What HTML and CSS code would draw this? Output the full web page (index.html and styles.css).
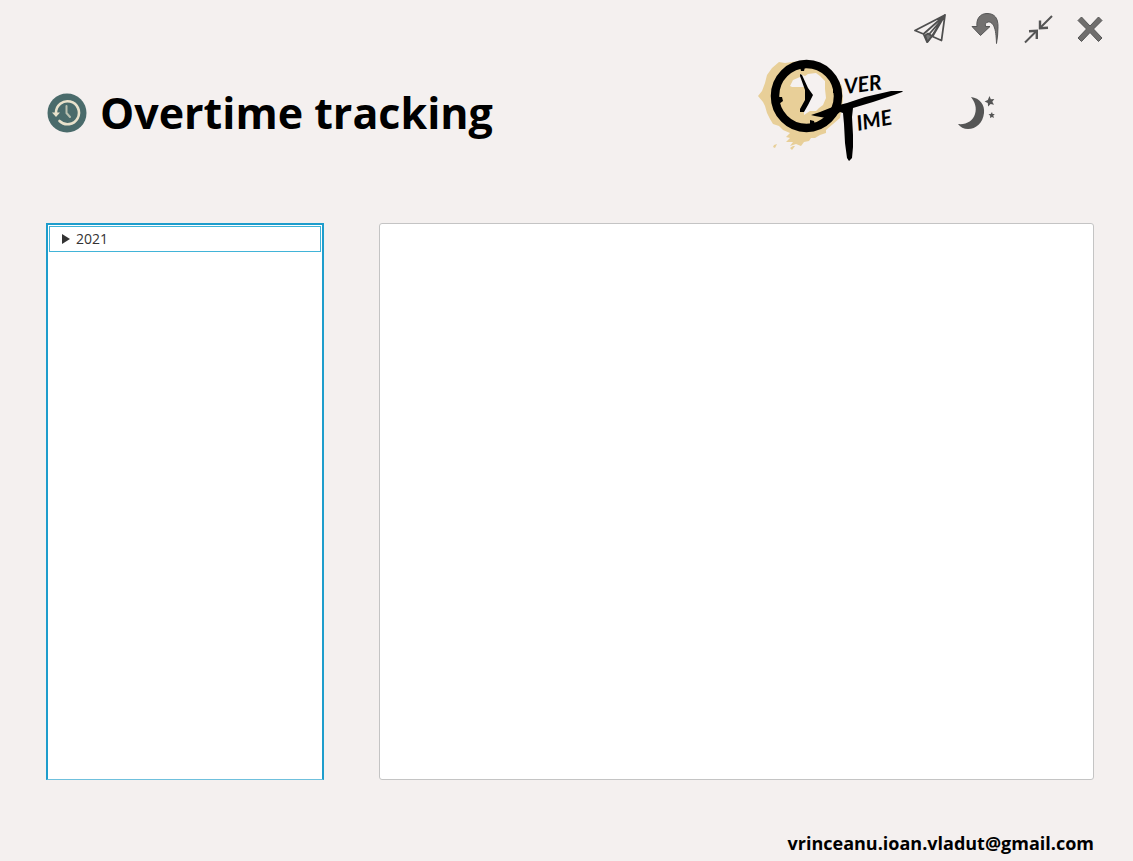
FILE: index.html
```html
<!DOCTYPE html>
<html lang="en">
<head>
<meta charset="utf-8">
<meta name="viewport" content="width=device-width, initial-scale=1">
<title>Overtime tracking</title>
<link rel="stylesheet" href="styles.css">
</head>
<body>
<div class="app">
  <nav class="toolbar" aria-label="Window">
    <button class="icon-button" type="button" aria-label="Send">
      <svg width="34" height="34" viewBox="0 0 34 34" fill="none" stroke="#4f4f4f" stroke-width="1.8" stroke-linejoin="round">
        <path d="M31 3L1 18.500l8.500 3.500zM31 3L27.500 28.500l-9-4zM31 3L9.500 22l3.500 8 5-6zM30 5L14 23.500l-.5 5.500"/>
        <path d="M11 23.500l3-2 4 2.500-4.500 6z" fill="#777"/>
      </svg>
    </button>
    <button class="icon-button" type="button" aria-label="Back">
      <svg width="34" height="34" viewBox="0 0 34 34">
        <path d="M5 14.500h5C9 7 13 1.500 20 1.500c8 0 11 5 11 13 0 6-.5 11-1.500 17-.3-8-.8-13-2.500-17-1.500-3.500-4-5-6-4.500-2.500.7-3 2-2.500 4.500h4.500l-9.500 9z" fill="#737170" stroke="#555" stroke-width="1"/>
      </svg>
    </button>
    <button class="icon-button" type="button" aria-label="Minimize">
      <svg width="34" height="34" viewBox="0 0 34 34" fill="none" stroke="#555" stroke-width="2">
        <path d="M32 4L20.500 15.500M5 30.500L16 19.500"/>
        <path d="M20 8.500V16.200L28 15.800M9 19.200L16.800 18.800V27" stroke-width="2.400"/>
      </svg>
    </button>
    <button class="icon-button" type="button" aria-label="Close">
      <svg width="34" height="34" viewBox="0 0 34 34">
        <path d="M5 8.500L8.500 5l8.500 9 8.500-9L29 8.500 20.500 17 29 26l-3.500 3.500-8.500-9-8.500 9L5 26l8.500-9z" fill="#706e6d" stroke="#555" stroke-width="1"/>
      </svg>
    </button>
  </nav>

  <header class="header">
    <svg class="badge" width="40" height="40" viewBox="0 0 40 40" aria-hidden="true">
      <circle cx="20" cy="20" r="19.500" fill="#4a6b6b"/>
      <path d="M9 20A11.500 11.500 0 1 1 12.500 28" fill="none" stroke="#e9e2cc" stroke-width="2.600" stroke-linecap="round"/>
      <path d="M5 19.500h8L9 24z" fill="#e9e2cc"/>
      <path d="M19.500 13v7l3.500 4" fill="none" stroke="#b9c0b0" stroke-width="2" stroke-linecap="round"/>
    </svg>
    <h1 class="title">Overtime tracking</h1>
    <svg class="logo" width="160" height="115" viewBox="0 0 160 115" role="img" aria-label="Over Time">
      <path d="M34 13l7-1 14-2 24 10 12 16 1 14-3 18-14 12 0 3-6 2-5 3-4 0-2 3-5 1-3 4-5-2-6 2 3-4-7 0 4-4-4-1 4-4-7-3-4-4-6-2-3-5-3-6-2-7-2-4-5-6 4-5 3-8 2-8 5-7 7-6zM22 97l1-2 3-1-2 4zM39 98l3-2 2 0-3 4z" fill="#e8cf98"/>
      <path d="M39 36l3-6 7-3 0-3 5 2 3-2 8-1 4 3 5 5 0 8 1 9-3 7-4 3-3 3-6 0-6 4 0-9 7-9-6-10-13 0z" fill="#f5f1f0"/>
      <ellipse cx="55.500" cy="46" rx="31.500" ry="32" fill="none" stroke="#000" stroke-width="8.500"/>
      <path d="M49 17h5l-1 4h-3zM28 47l3 0 1 4-4 3zM59 75v-5l4 1 1 4zM82 39l6 0v4h-6z"/>
      <path d="M49 24l2 1 6 13 5 7-5 10-4 7-4 0 0-3 5-9 0-10-5-14z"/>
      <path d="M60 65l9-3 15-6 12-3 18-6 26-6 12 0-1 1-8 3-21 7-20 6-1 9 1 18 0 12-1 11-3 3-2-3-2-15-1-19-1-11-3-1-7 6-7 0-11-2z"/>
      <g class="lettering">
        <text x="94" y="44" transform="rotate(-7 94 44)">VER</text>
        <text x="107" y="81" transform="rotate(-11 107 81)">IME</text>
      </g>
    </svg>
    <button class="theme" type="button" aria-label="Dark mode">
      <svg width="40" height="40" viewBox="0 0 40 40" fill="#555">
        <path d="M16 4c9 1 14 8 13 16C28 30 21 36 13 36 9 36 5 34 3 31c8 1 15-3 17-10 2-6 0-12-4-17z"/>
        <path d="M34.500 3l1.300 3.200 3.500-.3-2 2.800 1.700 3.100-3.400-.8-2.500 2.600-.3-3.500-3.200-1.500 3.200-1.500zM37 19l.6 2 2.200.1-1.500 1.500.6 2.400-1.900-1-2 1 .2-2.300-1.700-1.500 2.200-.3z"/>
      </svg>
    </button>
  </header>

  <main class="content">
    <ul class="tree" role="tree" aria-label="Years" tabindex="0">
      <li class="tree-item" role="treeitem" aria-expanded="false" aria-selected="false">
        <svg width="8" height="10" viewBox="0 0 8 10" aria-hidden="true"><path d="M0 0l8 5-8 5z" fill="#333"/></svg>
        <span>2021</span>
      </li>
    </ul>
    <section class="detail" aria-label="Details"></section>
  </main>

  <footer class="footer">vrinceanu.ioan.vladut@gmail.com</footer>
</div>
</body>
</html>
```
FILE: styles.css
```css
* { box-sizing: border-box; }

body {
  margin: 0;
  background: #f4f0ef;
  color: #000;
  font-family: "Open Sans", "Noto Sans", sans-serif;
}

button {
  padding: 0;
  border: 0;
  background: none;
  cursor: pointer;
}

svg { display: block; }

.app {
  display: flex;
  flex-direction: column;
  min-height: 100vh;
  padding: 12px 39px 6px 46px;
}

.toolbar {
  display: flex;
  justify-content: flex-end;
  gap: 19px;
  margin-right: -13px;
}

.header {
  display: flex;
  align-items: center;
  height: 125px;
  margin-top: 4px;
  padding: 0 99px 0 1px;
}

.title {
  margin: 0 auto 0 13px;
  font-size: 43px;
  line-height: 60px;
  font-weight: 700;
  white-space: nowrap;
}

.logo {
  flex: none;
  align-self: flex-start;
}

.lettering {
  font-family: Lato, sans-serif;
  font-size: 21px;
  font-style: italic;
  font-weight: 700;
}

.theme { margin-left: 44px; }

.content {
  display: grid;
  grid-template-columns: minmax(0, 278fr) minmax(0, 715fr);
  gap: 55px;
  flex: 1;
  margin-top: 48px;
}

.tree {
  margin: 0;
  padding: 1px;
  list-style: none;
  background: #fff;
  border: 2px solid #1e9dcc;
  border-bottom: 1px solid #6fc0dd;
  outline: none;
}

.tree-item {
  display: flex;
  align-items: center;
  gap: 6px;
  height: 26px;
  padding-left: 12px;
  border: 1px solid #42b4d8;
  color: #333;
  font-size: 14px;
  line-height: 20px;
}

.detail {
  background: #fff;
  border: 1px solid #c4c4c4;
  border-radius: 3px;
}

.footer {
  margin-top: 51px;
  font-size: 18px;
  line-height: 24px;
  font-weight: 700;
  text-align: right;
}
```
